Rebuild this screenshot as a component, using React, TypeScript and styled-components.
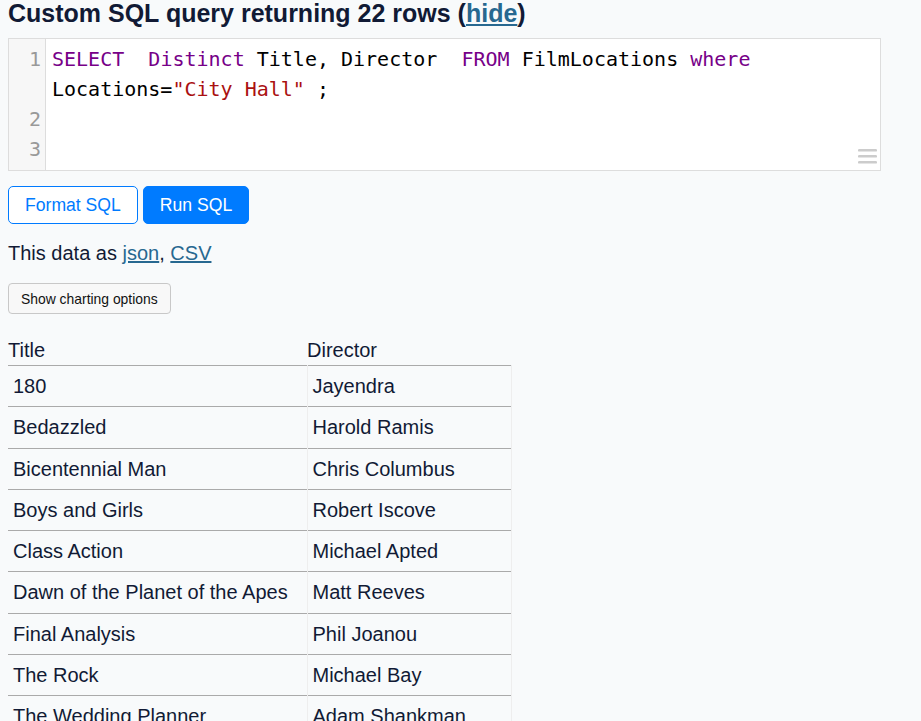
import React from "react";
import styled, { createGlobalStyle } from "styled-components";

const GlobalStyle = createGlobalStyle`
  html, body { overflow: hidden; }
  body {
    margin: 0;
    padding: 0 8px;
    font-family: "Liberation Sans", Helvetica, Arial, sans-serif;
    font-size: 20px;
    line-height: 1.5;
    color: #111a35;
    background: #f8fafb;
  }
`;

const Page = styled.div`
  display: flex;
  flex-direction: column;
  align-items: flex-start;
`;

const Heading = styled.h3`
  margin: 0;
  font-size: 25px;
  font-weight: 700;
  line-height: 27px;
`;

const Link = styled.a`
  color: #276890;
  text-decoration: underline;
`;

const Editor = styled.div`
  position: relative;
  box-sizing: border-box;
  width: 873px;
  margin-top: 11px;
  padding: 4.5px 0 6.5px;
  border: 1px solid #dddddd;
  background: linear-gradient(
    to right,
    #f7f7f7 0,
    #f7f7f7 36px,
    #dddddd 36px,
    #dddddd 37px,
    #ffffff 37px
  );
  font-family: "DejaVu Sans Mono", monospace;
  font-size: 20px;
  line-height: 30px;
`;

const LineRow = styled.div`
  display: grid;
  grid-template-columns: 37px 1fr;
`;

const LineNo = styled.div`
  box-sizing: border-box;
  padding-right: 5px;
  text-align: right;
  color: #999999;
`;

const LineText = styled.div`
  padding: 0 28px 0 6px;
  white-space: pre-wrap;
  color: #000000;
`;

const Kw = styled.span`
  color: #770088;
`;

const Str = styled.span`
  color: #aa1111;
`;

const Grip = styled.svg`
  position: absolute;
  right: 3px;
  bottom: 6px;
`;

const ButtonRow = styled.div`
  display: flex;
  gap: 5px;
  margin-top: 15px;
`;

const SqlButton = styled.button<{ $primary?: boolean }>`
  box-sizing: border-box;
  height: 38px;
  padding: 0 16px;
  border: 1px solid #007bff;
  border-radius: 5px;
  font-family: "Liberation Sans", Helvetica, Arial, sans-serif;
  font-size: 17.6px;
  color: ${(p) => (p.$primary ? "#ffffff" : "#007bff")};
  background: ${(p) => (p.$primary ? "#007bff" : "#ffffff")};
  cursor: pointer;
`;

const DataLinks = styled.p`
  margin: 14px 0 0;
  line-height: 30px;
`;

const SmallButton = styled.button`
  box-sizing: border-box;
  height: 31px;
  margin-top: 15px;
  padding: 0 12px;
  border: 1px solid #c8c8c8;
  border-radius: 4px;
  background: #f8f8f8;
  font-family: "Liberation Sans", Helvetica, Arial, sans-serif;
  font-size: 13.9px;
  color: #111111;
`;

const Table = styled.table`
  margin-top: 21px;
  border-collapse: collapse;
  table-layout: fixed;
  width: 503px;
`;

const Th = styled.th`
  padding: 0 20px 0 0;
  text-align: left;
  font-weight: 400;
  line-height: 30px;
  white-space: nowrap;
`;

const Td = styled.td`
  padding: 5px;
  line-height: 30.25px;
  border-top: 1px solid #aaaaaa;
  border-right: 1px solid #eeeeee;
  vertical-align: top;
  white-space: pre-wrap;
`;

const rows: [string, string][] = [
  ["180", "Jayendra"],
  ["Bedazzled", "Harold Ramis"],
  ["Bicentennial Man", "Chris Columbus"],
  ["Boys and Girls", "Robert Iscove"],
  ["Class Action", "Michael Apted"],
  ["Dawn of the Planet of the Apes", "Matt Reeves"],
  ["Final Analysis", "Phil Joanou"],
  ["The Rock", "Michael Bay"],
  ["The Wedding Planner", "Adam Shankman"],
];

export default function App() {
  return (
    <Page>
      <GlobalStyle />
      <Heading>
        Custom SQL query returning 22 rows (<Link href="#">hide</Link>)
      </Heading>
      <Editor>
        <LineRow>
          <LineNo>1</LineNo>
          <LineText>
            <Kw>SELECT</Kw>{"  "}<Kw>Distinct</Kw>{" Title, Director  "}
            <Kw>FROM</Kw>{" FilmLocations "}<Kw>where</Kw>{" Locations="}
            <Str>"City Hall"</Str>{" ;"}
          </LineText>
        </LineRow>
        <LineRow>
          <LineNo>2</LineNo>
          <LineText>{" "}</LineText>
        </LineRow>
        <LineRow>
          <LineNo>3</LineNo>
          <LineText>{" "}</LineText>
        </LineRow>
        <Grip width="19" height="15" viewBox="0 0 19 15">
          <rect x="0" y="0" width="19" height="2.6" rx="1.2" fill="#cccccc" />
          <rect x="0" y="6" width="19" height="2.6" rx="1.2" fill="#cccccc" />
          <rect x="0" y="12" width="19" height="2.6" rx="1.2" fill="#cccccc" />
        </Grip>
      </Editor>
      <ButtonRow>
        <SqlButton type="button">Format SQL</SqlButton>
        <SqlButton type="button" $primary>
          Run SQL
        </SqlButton>
      </ButtonRow>
      <DataLinks>
        This data as <Link href="#">json</Link>, <Link href="#">CSV</Link>
      </DataLinks>
      <SmallButton type="button">Show charting options</SmallButton>
      <Table>
        <colgroup>
          <col style={{ width: 299 }} />
          <col style={{ width: 204 }} />
        </colgroup>
        <thead>
          <tr>
            <Th>Title</Th>
            <Th>Director</Th>
          </tr>
        </thead>
        <tbody>
          {rows.map(([title, director]) => (
            <tr key={title}>
              <Td>{title}</Td>
              <Td>{director}</Td>
            </tr>
          ))}
        </tbody>
      </Table>
    </Page>
  );
}
